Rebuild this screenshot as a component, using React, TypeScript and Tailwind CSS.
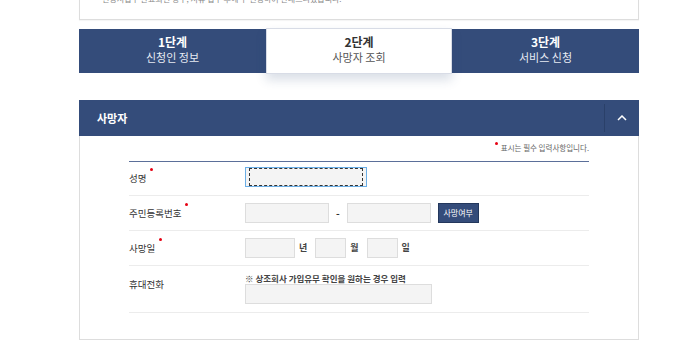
const font = "font-['Noto_Sans_CJK_KR','Noto_Sans',sans-serif]";

function Dot() {
  return <span className="absolute -right-[7px] -top-[3px] h-[3px] w-[3px] rounded-full bg-[#e60012]" />;
}

function Field({ w }: { w: string }) {
  return <div className={`${w} h-[20px] border border-[#dddddd] bg-[#f4f4f4]`} />;
}

function Row({ label, required, children, h, labelClass = '' }: { label: string; required?: boolean; children: React.ReactNode; h: string; labelClass?: string }) {
  return (
    <div className={`flex items-center border-b border-[#ececec] ${h}`}>
      <div className={`w-[116px] text-[9.5px] text-[#333] ${labelClass}`}>
        <span className="relative">
          {label}
          {required && <Dot />}
        </span>
      </div>
      <div className="flex-1">{children}</div>
    </div>
  );
}

export default function App() {
  const steps = [
    { n: '1단계', t: '신청인 정보' },
    { n: '2단계', t: '사망자 조회' },
    { n: '3단계', t: '서비스 신청' },
  ];

  return (
    <div className={`h-[348px] w-[700px] overflow-hidden bg-white ${font}`}>
      <div className="ml-[79px] w-[560px]">
        {/* previous notice box, mostly scrolled off */}
        <div className="-mt-[6px] h-[26px] border border-t-0 border-[#dddddd] px-[22px] pt-0 text-[8px] leading-[10px] text-[#888] shadow-[0_1px_1px_rgba(0,0,0,0.04)]">
          신청서접수 완료되면 경우, 서류 접수 후에 수 신청하여 안내드리겠습니다.
        </div>

        {/* steps */}
        <div className="mt-[9px] flex h-[44px] bg-[#344c7a]">
          {steps.map((s, i) =>
            i === 1 ? (
              <div
                key={s.n}
                className="relative z-10 -my-[1px] flex w-[186px] flex-col items-center justify-center border border-[#d8dce6] bg-white pb-[3px] shadow-[0_6px_10px_rgba(52,76,122,0.18)]"
              >
                <div className="text-[12px] font-bold leading-[16px] text-[#333]">{s.n}</div>
                <div className="text-[11px] leading-[15px] text-[#555]">{s.t}</div>
              </div>
            ) : (
              <div key={s.n} className="flex w-[187px] flex-col items-center justify-center pb-[3px]">
                <div className="text-[12px] font-bold leading-[16px] text-white">{s.n}</div>
                <div className="text-[11px] leading-[15px] text-[#e6eaf2]">{s.t}</div>
              </div>
            )
          )}
        </div>

        {/* section */}
        <div className="mt-[27px] border border-[#dddddd]">
          <div className="-m-px flex h-[36px] items-center bg-[#344c7a]">
            <div className="flex-1 pl-[18px] text-[11px] font-bold text-white">사망자</div>
            <div className="h-[28px] w-px bg-[#2a4069]" />
            <div className="flex w-[34px] items-center justify-center">
              <svg width="10" height="6" viewBox="0 0 10 6" fill="none">
                <path d="M1 5 L5 1 L9 5" stroke="white" strokeWidth="1.5" />
              </svg>
            </div>
          </div>

          <div className="px-[49px] pb-[26px]">
            <div className="flex justify-end pt-[7px] pb-[7px]">
              <span className="relative text-[7.5px] leading-[12px] text-[#666]">
                <span className="absolute -left-[6px] top-[0px] h-[3px] w-[3px] rounded-full bg-[#e60012]" />
                표시는 필수 입력사항입니다.
              </span>
            </div>
            <div className="h-px bg-[#5b6f99]" />

            <Row label="성명" required h="h-[34px]">
              <div className="relative -mt-[3px] h-[20px] w-[122px] border border-[#6aaee6] bg-[#f4f4f4]">
                <div className="absolute inset-y-0 left-[3px] right-[3px] border border-dashed border-[#333]" />
              </div>
            </Row>

            <Row label="주민등록번호" required h="h-[35px]">
              <div className="-mt-[1px] flex items-center">
                <Field w="w-[84px]" />
                <span className="mx-[7px] text-[10px] font-bold text-[#333]">-</span>
                <Field w="w-[84px]" />
                <div className="ml-[7px] flex h-[20px] w-[41px] items-center justify-center border border-[#23375c] bg-[#344c7a] text-[8px] text-white">
                  사망여부
                </div>
              </div>
            </Row>

            <Row label="사망일" required h="h-[35px]">
              <div className="flex items-center text-[9px] font-bold text-[#444]">
                <Field w="w-[50px]" />
                <span className="ml-[4px] mr-[8px]">년</span>
                <Field w="w-[31px]" />
                <span className="ml-[4px] mr-[8px]">월</span>
                <Field w="w-[31px]" />
                <span className="ml-[4px]">일</span>
              </div>
            </Row>

            <Row label="휴대전화" h="h-[47px]" labelClass="-mt-[10px]">
              <div className="-mt-[2px] flex flex-col">
                <div className="text-[8.5px] font-bold leading-[12px] text-[#444]">※ 상조회사 가입유무 확인을 원하는 경우 입력</div>
                <Field w="w-[187px]" />
              </div>
            </Row>
          </div>
        </div>
      </div>
    </div>
  );
}
